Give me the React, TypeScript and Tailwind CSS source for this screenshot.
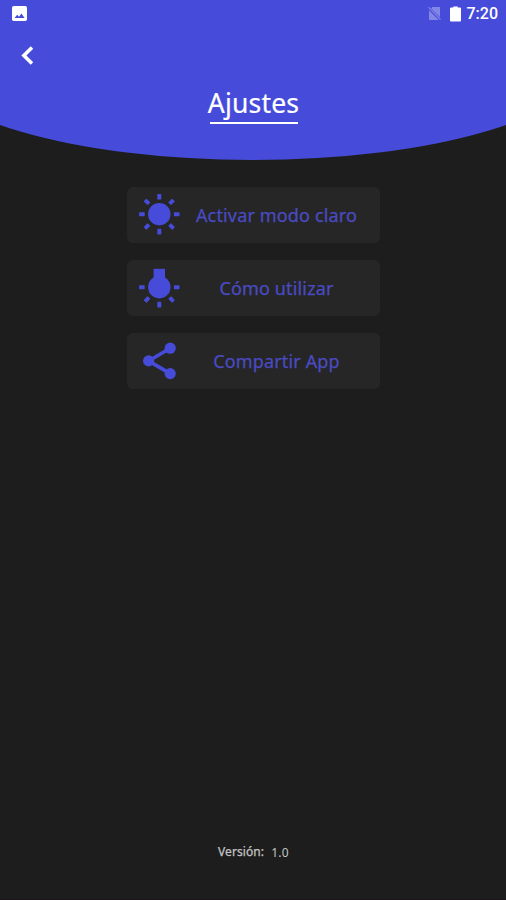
import React from "react";

const SunIcon = () => (
    <svg className="size-full" viewBox="0 0 42 42" fill="currentColor">
        <circle cx="21.3" cy="21.2" r="11.2" />
        {[0, 45, 90, 135, 180, 225, 270, 315].map((angle) => (
            <rect key={angle} x="19.3" y="1" width="4" height="5.6" rx="0.6" transform={`rotate(${angle} 21.3 21.2)`} />
        ))}
    </svg>
);

const BulbIcon = () => (
    <svg className="size-full" viewBox="0 0 42 42" fill="currentColor">
        <circle cx="21.3" cy="21.2" r="11.2" />
        <rect x="15.6" y="2.8" width="11.4" height="12" />
        {[90, 135, 180, 225, 270].map((angle) => (
            <rect key={angle} x="19.3" y="1" width="4" height="5.6" rx="0.6" transform={`rotate(${angle} 21.3 21.2)`} />
        ))}
    </svg>
);

const ShareIcon = () => (
    <svg className="size-full" viewBox="0 0 42 42" fill="currentColor">
        <path d="M32.2 9.2L10.6 21.9L32.2 34.6" fill="none" stroke="currentColor" strokeWidth="3.6" />
        <circle cx="32.2" cy="9.2" r="5.6" />
        <circle cx="10.6" cy="21.9" r="5.6" />
        <circle cx="32.2" cy="34.6" r="5.6" />
    </svg>
);

const OPTIONS = [
    { label: "Activar modo claro", icon: <SunIcon /> },
    { label: "Cómo utilizar", icon: <BulbIcon /> },
    { label: "Compartir App", icon: <ShareIcon /> },
];

const StatusBar = () => (
    <div className="h-7 flex items-center justify-between pl-3 pr-2">
        <svg className="w-[15px] h-[15px] -mt-px" viewBox="0 0 15 15">
            <rect width="15" height="15" rx="1.8" fill="#fff" />
            <path d="M2.5 12L5.2 8.7L7 10.8L9.4 7.6L12.6 12Z" fill="#464cd9" />
        </svg>
        <div className="flex items-center">
            <svg className="w-[13px] h-[15px] mr-[9px] -mt-px" viewBox="0 0 13 15">
                <path d="M4.5 1H12V11.2L3.2 2.4ZM1 4.3L10.7 14H2Q1 14 1 13Z" fill="#8286e6" />
                <path d="M0.5 1.2L12.5 13.6" stroke="#8286e6" strokeWidth="1.2" />
            </svg>
            <svg className="w-[11px] h-4 mr-1.5 -mt-px" viewBox="0 0 11 16">
                <path d="M3.3 0.5H7.7V1.5H10Q11 1.5 11 2.5V14.5Q11 15.5 10 15.5H1Q0 15.5 0 14.5V2.5Q0 1.5 1 1.5H3.3Z" fill="#fff" />
            </svg>
            <span className="font-[Roboto,sans-serif] font-medium text-base leading-none text-white">7:20</span>
        </div>
    </div>
);

const App = () => {
    return (
        <div className="w-full h-[900px] bg-[#1d1d1d] overflow-hidden flex flex-col items-center font-['Noto_Sans',sans-serif] border-b border-[#1d131a]">
            {/* Header is wider than the screen so the ellipse is cut at both sides */}
            <header className="w-[660px] h-[159.5px] shrink-0 bg-[#464cd9] [border-radius:0_0_330px_330px/0_0_98px_98px] flex justify-center">
                <div className="w-[506px] flex flex-col">
                    <StatusBar />
                    <button className="mt-[18px] ml-[21px] w-3 h-[19px]" aria-label="Volver">
                        <svg viewBox="0 0 12 19" fill="none" stroke="#fff" strokeWidth="3.6">
                            <path d="M11 1.5L2.9 9.5L11 17.5" />
                        </svg>
                    </button>
                    <div className="mt-[21px] ml-px self-center w-[88px] h-[38px] border-b-2 border-white flex justify-center">
                        <h1 className="text-[26.5px] leading-[34px] tracking-[0.2px] text-white whitespace-nowrap [-webkit-text-stroke:0.2px_#fff]">Ajustes</h1>
                    </div>
                </div>
            </header>
            <main className="mt-[27.5px] w-[253px] flex flex-col gap-[17px]">
                {OPTIONS.map((item, index) => (
                    <button key={index} className="h-14 rounded-md bg-[#262626] flex items-center text-[#464cd9]">
                        <span className="ml-[11px] size-[42px] mb-0.5 shrink-0">{item.icon}</span>
                        <span className="ml-[9px] w-[176px] text-center text-[18px] leading-6 tracking-[0.15px] whitespace-nowrap text-[#4a4bc2] [-webkit-text-stroke:0.25px_#4a4bc2]">
                            {item.label}
                        </span>
                    </button>
                ))}
            </main>
            <footer className="mt-auto mb-[38px] ml-px flex gap-[7px] text-xs leading-4 text-[#c4c4c4]">
                <span className="tracking-[0.1px] [-webkit-text-stroke:0.25px_#c4c4c4]">Versión:</span>
                <span className="pt-px tracking-[0.3px]">1.0</span>
            </footer>
        </div>
    );
};

export default App;
